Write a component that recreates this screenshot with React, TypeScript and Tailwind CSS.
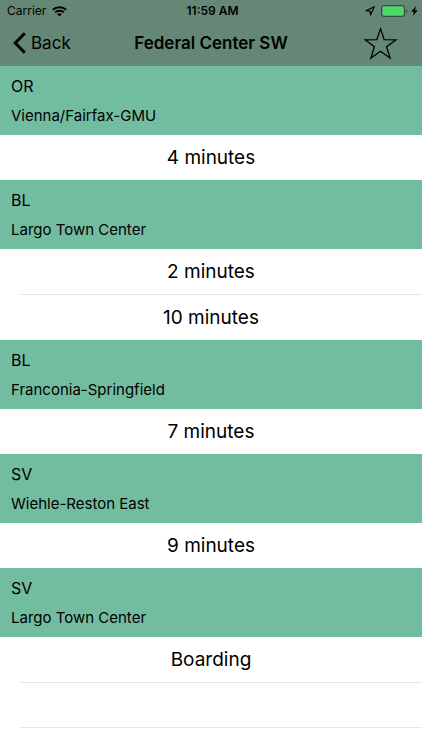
import React from 'react';

type Line = {
  code: string;
  destination: string;
  arrivals: string[];
};

const lines: Line[] = [
  { code: 'OR', destination: 'Vienna/Fairfax-GMU', arrivals: ['4 minutes'] },
  { code: 'BL', destination: 'Largo Town Center', arrivals: ['2 minutes', '10 minutes'] },
  { code: 'BL', destination: 'Franconia-Springfield', arrivals: ['7 minutes'] },
  { code: 'SV', destination: 'Wiehle-Reston East', arrivals: ['9 minutes'] },
  { code: 'SV', destination: 'Largo Town Center', arrivals: ['Boarding'] },
];

const WifiIcon = () => (
  <svg width="15" height="11" viewBox="0 0 15 11" fill="none" stroke="currentColor" strokeWidth="2">
    <path d="M0.8 3.8C4.5 0.3 10.5 0.3 14.2 3.8" />
    <path d="M3.2 6.3C5.6 4.1 9.4 4.1 11.8 6.3" />
    <path d="M7.5 10.6L5 8.1C6.4 6.9 8.6 6.9 10 8.1Z" fill="currentColor" stroke="none" />
  </svg>
);

const LocationIcon = () => (
  <svg width="10" height="10" viewBox="0 0 10 10" fill="none" stroke="currentColor" strokeWidth="1.2" strokeLinejoin="round">
    <path d="M9.2 0.8L5.6 9L5 5.1L1 4.7Z" />
  </svg>
);

const BatteryIcon = () => (
  <svg width="27" height="12" viewBox="0 0 27 12" fill="none">
    <rect x="0.6" y="0.6" width="23" height="10.8" rx="2.4" stroke="#31463b" strokeWidth="1" />
    <rect x="1.6" y="1.6" width="21" height="8.8" rx="1.4" fill="#4cd964" />
    <path d="M25 4C26.4 4.5 26.4 7.5 25 8Z" fill="#31463b" />
  </svg>
);

const BoltIcon = () => (
  <svg width="7" height="10" viewBox="0 0 7 10" fill="currentColor">
    <path d="M5 0L0.2 5.7H2.9L1.8 10L6.8 4.2H4Z" />
  </svg>
);

const ChevronIcon = () => (
  <svg width="14" height="24" viewBox="0 0 14 24" fill="none" stroke="currentColor" strokeWidth="3">
    <path d="M11.8 1.2L2.2 11L11.8 20.8" />
  </svg>
);

const StarIcon = () => (
  <svg width="34" height="34" viewBox="0 0 34 34" fill="none" stroke="currentColor" strokeWidth="1.3">
    <path d="M16.5 1.8L20.2 12.6L32 12.8L22.6 19.8L26.1 31L16.5 24.2L6.9 31L10.4 19.8L1 12.8L12.8 12.6Z" />
  </svg>
);

const StatusBar = () => (
  <div className="grid grid-cols-3 items-center h-[22px] pl-[7px] pr-1 text-xs">
    <div className="flex items-center gap-[6px]">
      <span>Carrier</span>
      <WifiIcon />
    </div>
    <span className="text-center font-semibold">11:59 AM</span>
    <div className="flex items-center justify-end gap-[3px]">
      <span className="flex pr-[3px]">
        <LocationIcon />
      </span>
      <BatteryIcon />
      <BoltIcon />
    </div>
  </div>
);

const NavBar = () => (
  <div className="grid grid-cols-[1fr_auto_1fr] items-center h-11">
    <button type="button" className="flex items-center gap-1 justify-self-start pl-[13px] text-[17px]">
      <ChevronIcon />
      Back
    </button>
    <h1 className="text-[17px] font-semibold">Federal Center SW</h1>
    <button type="button" aria-label="Add to favorites" className="justify-self-end pr-6">
      <StarIcon />
    </button>
  </div>
);

const App: React.FC = () => {
  return (
    <div className="min-h-screen bg-white text-black font-['Inter','Liberation_Sans',sans-serif]">
      <header className="bg-[#658876]">
        <StatusBar />
        <NavBar />
      </header>
      <main>
        {lines.map((line) => (
          <section key={line.code + line.destination}>
            <div className="bg-[#72bda0] h-[69px] px-[11px] pt-2">
              <h2 className="text-base leading-6">{line.code}</h2>
              <p className="text-[15px] leading-6 mt-[6px]">{line.destination}</p>
            </div>
            <ul>
              {line.arrivals.map((arrival, i) => (
                <li key={arrival}>
                  {i > 0 && <div className="h-px ml-5 bg-[#e6e6e6]"></div>}
                  <div className="h-[45px] pt-[2px] flex items-center justify-center text-[19px]">{arrival}</div>
                </li>
              ))}
            </ul>
          </section>
        ))}
        {/* empty table rows below the last train */}
        <div className="ml-5 h-[46px] border-y border-[#e6e6e6]"></div>
      </main>
    </div>
  );
};

export default App;
